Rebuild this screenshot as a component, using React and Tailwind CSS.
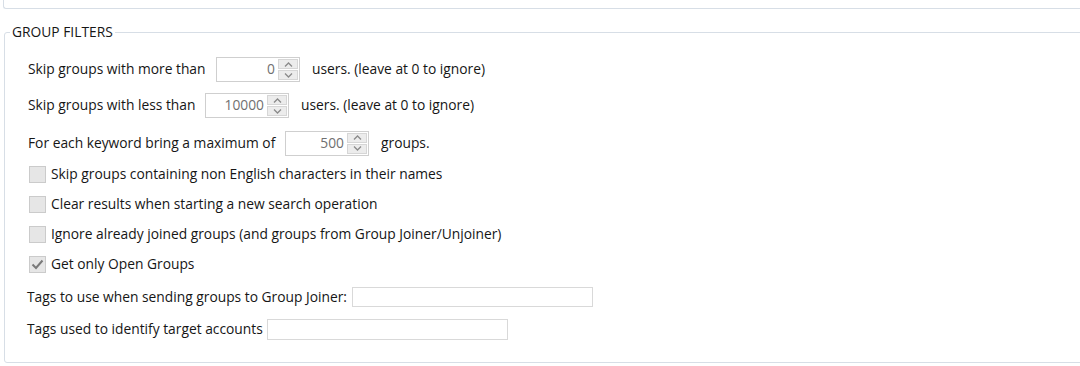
function Spin({ value }) {
  return (
    <div className="flex h-[25px] w-[84px] border border-[#cfcfcf] bg-white">
      <div className="flex-1 flex items-center justify-end pr-[3px] text-[#707070]">{value}</div>
      <div className="flex w-[21px] flex-col gap-px py-px pr-px">
        <div className="flex flex-1 items-center justify-center border border-[#d6d6d6] bg-[#ececec]">
          <svg width="9" height="5" viewBox="0 0 9 5">
            <path d="M1 4.5 L4.5 1 L8 4.5" fill="none" stroke="#8a8a8a" strokeWidth="1.3" />
          </svg>
        </div>
        <div className="flex flex-1 items-center justify-center border border-[#d6d6d6] bg-[#ececec]">
          <svg width="9" height="5" viewBox="0 0 9 5">
            <path d="M1 0.5 L4.5 4 L8 0.5" fill="none" stroke="#8a8a8a" strokeWidth="1.3" />
          </svg>
        </div>
      </div>
    </div>
  );
}

function Check({ label, checked }) {
  return (
    <div className="flex h-[30px] items-center pl-[24px]">
      <div className="flex h-[17px] w-[17px] shrink-0 items-center justify-center border border-[#cbcbcb] bg-[#e6e6e6]">
        {checked && (
          <svg width="13" height="11" viewBox="0 0 13 11">
            <path d="M1.5 5.5 L5 9 L11.5 1.5" fill="none" stroke="#7a7a7a" strokeWidth="2" />
          </svg>
        )}
      </div>
      <span className="ml-[5px]">{label}</span>
    </div>
  );
}

export default function App() {
  return (
    <div className="h-[366px] w-[1080px] overflow-hidden bg-white font-['Segoe_UI','Open_Sans',sans-serif] text-[13.8px] text-[#161616]">
      <div className="ml-[3px] h-[9px] w-[1100px] rounded-b-[3px] border-b border-l border-[#d7dee6]" />

      <fieldset className="ml-[4px] mt-[14px] h-[340px] w-[1100px] rounded-[3px] border border-[#d7dee6] bg-white">
        <legend className="ml-[5px] px-[2px] text-[13.8px] leading-[18px]">GROUP FILTERS</legend>

        <div className="flex flex-col">
          <div className="mt-[16px] flex h-[25px] items-center pl-[23px]">
            <span className="w-[188px] shrink-0">Skip groups with more than</span>
            <Spin value="0" />
            <span className="ml-[12px]">users. (leave at 0 to ignore)</span>
          </div>
          <div className="mt-[11px] flex h-[25px] items-center pl-[23px]">
            <span className="w-[177px] shrink-0">Skip groups with less than</span>
            <Spin value="10000" />
            <span className="ml-[12px]">users. (leave at 0 to ignore)</span>
          </div>
          <div className="mt-[13px] flex h-[24px] items-center pl-[23px]">
            <span className="w-[257px] shrink-0">For each keyword bring a maximum of</span>
            <Spin value="500" />
            <span className="ml-[12px]">groups.</span>
          </div>

          <div className="mt-[4px]">
            <Check label="Skip groups containing non English characters in their names" />
            <Check label="Clear results when starting a new search operation" />
            <Check label="Ignore already joined groups (and groups from Group Joiner/Unjoiner)" />
            <Check label="Get only Open Groups" checked />
          </div>

          <div className="mt-[8px] flex h-[20px] items-center pl-[22px]">
            <span className="w-[325px] shrink-0 whitespace-nowrap">Tags to use when sending groups to Group Joiner:</span>
            <div className="h-[20px] w-[241px] shrink-0 border border-[#d9d9d9] bg-white" />
          </div>
          <div className="mt-[12px] flex h-[21px] items-center pl-[22px]">
            <span className="w-[240px] shrink-0 whitespace-nowrap">Tags used to identify target accounts</span>
            <div className="h-[21px] w-[241px] shrink-0 border border-[#d9d9d9] bg-white" />
          </div>
        </div>
      </fieldset>
    </div>
  );
}
